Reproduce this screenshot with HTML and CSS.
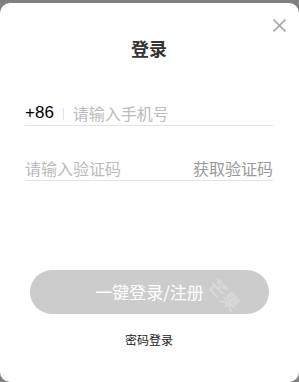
FILE: index.html
```html
<!DOCTYPE html>
<html lang="zh-CN">

<head>
    <meta charset="UTF-8">
    <meta name="viewport" content="width=device-width, initial-scale=1.0">
    <title>登录</title>
    <link rel="stylesheet" href="styles.css">
</head>

<body>
    <div class="modal">
        <button class="close" aria-label="关闭">
            <svg width="13" height="13" viewBox="0 0 13 13">
                <path d="M0.5 0.5 L12.5 12.5 M12.5 0.5 L0.5 12.5" stroke="#a3a7b0" stroke-width="1.6" fill="none"/>
            </svg>
        </button>

        <h1 class="title">登录</h1>

        <div class="field phone">
            <span class="code">+86</span>
            <span class="divider"></span>
            <input type="text" placeholder="请输入手机号">
        </div>

        <div class="field sms">
            <input type="text" placeholder="请输入验证码">
            <span class="get-code">获取验证码</span>
        </div>

        <button class="submit">
            一键登录/注册
            <span class="mark">芒果</span>
        </button>

        <a class="switch" href="#">密码登录</a>
    </div>
</body>

</html>
```

FILE: styles.css
```css
body {
    margin: 0;
    padding: 3px 0 0;
    background-color: #808080;
    font-family: "Noto Sans CJK SC", "Liberation Sans", sans-serif;
    height: 382px;
    box-sizing: border-box;
    overflow: hidden;
}

.modal {
    position: relative;
    height: 379px;
    box-sizing: border-box;
    background-color: #ffffff;
    border-radius: 10px;
    padding: 33px 26px 0 25px;
    display: flex;
    flex-direction: column;
}

.close {
    position: absolute;
    top: 16px;
    right: 13px;
    padding: 0;
    border: none;
    background: none;
    width: 13px;
    height: 13px;
    line-height: 0;
}

.title {
    margin: 0;
    text-align: center;
    font-size: 18px;
    line-height: 24px;
    font-weight: bold;
    color: #333333;
}

.field {
    display: flex;
    align-items: center;
    height: 24px;
    border-bottom: 1px solid #e3e3e3;
}

.field input {
    flex: 1;
    min-width: 0;
    border: none;
    outline: none;
    padding: 0;
    font-family: inherit;
    font-size: 16px;
    line-height: 20px;
    height: 20px;
    color: #333;
    background: none;
}

.field input::placeholder {
    color: #bbbbbb;
}

.phone {
    margin-top: 41px;
}

.code {
    font-family: "Liberation Sans", sans-serif;
    font-size: 17px;
    line-height: 20px;
    color: #000;
}

.divider {
    width: 1px;
    height: 12px;
    background-color: #e3e3e3;
    margin: 2px 9px 0 9px;
}

.sms {
    margin-top: 30px;
}

.get-code {
    font-size: 16px;
    line-height: 20px;
    color: #999999;
}

.submit {
    position: relative;
    margin: 89px 4px 0 5px;
    height: 44px;
    padding: 0;
    border: none;
    border-radius: 22px;
    background-color: #cccccc;
    color: #ffffff;
    font-family: inherit;
    font-size: 17px;
    line-height: 20px;
}

.mark {
    position: absolute;
    right: 26px;
    top: 14px;
    transform: rotate(45deg);
    font-size: 18px;
    font-weight: bold;
    line-height: 20px;
    color: rgba(255, 255, 255, 0.25);
}

.switch {
    margin-top: 18px;
    align-self: center;
    font-size: 12px;
    line-height: 16px;
    color: #222;
    text-decoration: none;
}
```
